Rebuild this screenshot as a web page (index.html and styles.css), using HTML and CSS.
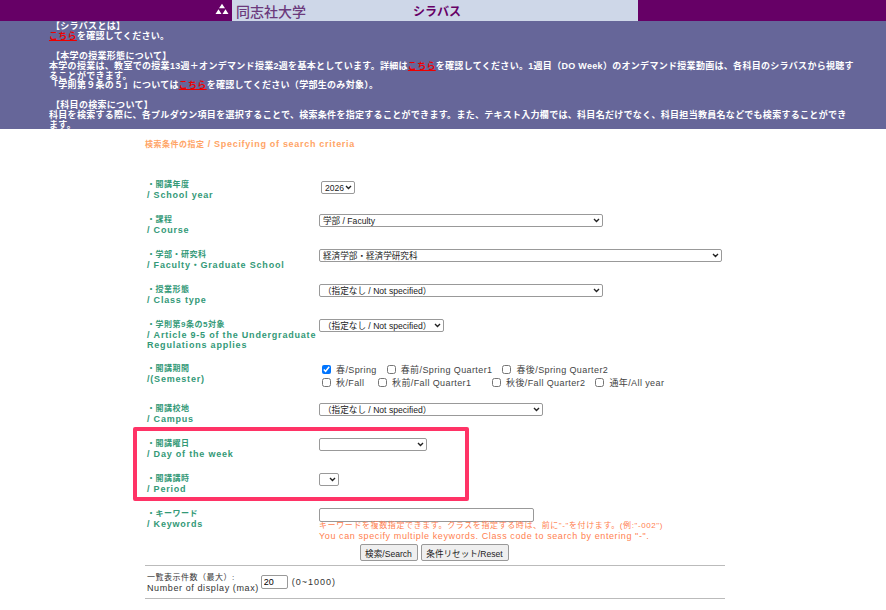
FILE: index.html
```html
<!DOCTYPE html>
<html lang="ja">
<head>
  <meta charset="UTF-8" />
  <title>シラバス</title>
  <link rel="stylesheet" href="styles.css">
</head>
<body>

  <!-- Header -->
  <div class="top-bar">
    <div class="logo-mark">
      <svg width="14" height="14" viewBox="0 0 14 14">
        <path d="M7 .8 L10 5.2 L4 5.2 Z M3.5 6.2 L6.5 11 L.5 11 Z M10.5 6.2 L13.5 11 L7.5 11 Z" fill="#fff"/>
      </svg>
    </div>
    <div class="title-box">
      <span class="univ-name">同志社大学</span>
      <span class="page-name">シラバス</span>
    </div>
  </div>

  <!-- Notice -->
  <div class="notice">
    <p class="indent">【シラバスとは】</p>
    <p><a href="#">こちら</a>を確認してください。</p>
    <p>&nbsp;</p>
    <p class="indent">【本学の授業形態について】</p>
    <p>本学の授業は、教室での授業13週＋オンデマンド授業2週を基本としています。詳細は<a href="#">こちら</a>を確認してください。1週目（DO Week）のオンデマンド授業動画は、各科目のシラバスから視聴することができます。</p>
    <p>「学則第９条の５」については<a href="#">こちら</a>を確認してください（学部生のみ対象）。</p>
    <p>&nbsp;</p>
    <p class="indent">【科目の検索について】</p>
    <p>科目を検索する際に、各プルダウン項目を選択することで、検索条件を指定することができます。また、テキスト入力欄では、科目名だけでなく、科目担当教員名などでも検索することができます。</p>
  </div>

  <!-- Search form -->
  <form class="search-form">
    <h2><span class="jp">検索条件の指定</span> / Specifying of search criteria</h2>

    <div class="highlight-box"></div>

    <div class="form-grid">
      <div class="row">
        <div class="label"><span class="jp">・開講年度</span><br>/ School year</div>
        <div class="field"><select class="sel-year"><option>2026</option></select></div>
      </div>
      <div class="row">
        <div class="label"><span class="jp">・課程</span><br>/ Course</div>
        <div class="field"><select class="sel-course"><option>学部 / Faculty</option></select></div>
      </div>
      <div class="row">
        <div class="label"><span class="jp">・学部・研究科</span><br>/ Faculty・Graduate School</div>
        <div class="field"><select class="sel-faculty"><option>経済学部・経済学研究科</option></select></div>
      </div>
      <div class="row">
        <div class="label"><span class="jp">・授業形態</span><br>/ Class type</div>
        <div class="field"><select class="sel-course"><option>（指定なし / Not specified）</option></select></div>
      </div>
      <div class="row row-tall">
        <div class="label"><span class="jp">・学則第9条の5対象</span><br>/ Article 9-5 of the Undergraduate Regulations applies</div>
        <div class="field"><select class="sel-article"><option>（指定なし / Not specified）</option></select></div>
      </div>
      <div class="row row-semester">
        <div class="label"><span class="jp">・開講期間</span><br>/(Semester)</div>
        <div class="field">
          <div class="checks">
            <label><input type="checkbox" checked>春/Spring</label>
            <label><input type="checkbox">春前/Spring Quarter1</label>
            <label><input type="checkbox">春後/Spring Quarter2</label>
          </div>
          <div class="checks">
            <label class="w-fall"><input type="checkbox">秋/Fall</label>
            <label class="w-q1"><input type="checkbox">秋前/Fall Quarter1</label>
            <label><input type="checkbox">秋後/Fall Quarter2</label>
            <label><input type="checkbox">通年/All year</label>
          </div>
        </div>
      </div>
      <div class="row">
        <div class="label"><span class="jp">・開講校地</span><br>/ Campus</div>
        <div class="field"><select class="sel-campus"><option>（指定なし / Not specified）</option></select></div>
      </div>
      <div class="row">
        <div class="label"><span class="jp">・開講曜日</span><br>/ Day of the week</div>
        <div class="field"><select class="sel-day"><option></option></select></div>
      </div>
      <div class="row">
        <div class="label"><span class="jp">・開講講時</span><br>/ Period</div>
        <div class="field"><select class="sel-period"><option></option></select></div>
      </div>
      <div class="row row-keyword">
        <div class="label"><span class="jp">・キーワード</span><br>/ Keywords</div>
        <div class="field">
          <input type="text" class="keyword">
          <p class="hint jp">キーワードを複数指定できます。クラスを指定する時は、前に"-"を付けます。(例:"-002")</p>
          <p class="hint">You can specify multiple keywords. Class code to search by entering "-".</p>
        </div>
      </div>
    </div>

    <div class="buttons">
      <button type="button" class="btn-search">検索/Search</button>
      <button type="button" class="btn-reset">条件リセット/Reset</button>
    </div>

    <div class="display-count">
      <div><span class="jp">一覧表示件数（最大）:</span><br>Number of display (max)</div>
      <input type="text" class="count" value="20">
      <div class="range">(0~1000)</div>
    </div>
  </form>

</body>
</html>
```

FILE: styles.css
```css
* {
  margin: 0;
  padding: 0;
  box-sizing: border-box;
}

body {
  font-family: "Liberation Sans", "Noto Sans CJK JP", sans-serif;
  background-color: #fff;
  height: 610px;
  overflow: hidden;
}

.top-bar {
  height: 21px;
  background-color: #660066;
  display: flex;
  justify-content: flex-end;
  padding-right: 248px;
}

.logo-mark {
  width: 17px;
  padding-top: 3px;
}

.title-box {
  width: 406px;
  background-color: #ced7e8;
  color: #660066;
  display: flex;
  align-items: center;
  padding-left: 4px;
}

.univ-name {
  font-family: "Noto Sans CJK JP", sans-serif;
  font-size: 14px;
  font-weight: 500;
  width: 177px;
  color: #6b3a7c;
}

.page-name {
  font-family: "Noto Sans CJK JP", sans-serif;
  font-size: 12px;
  font-weight: 700;
}

.notice {
  height: 108px;
  background-color: #666699;
  color: #fff;
  font-size: 9px;
  font-weight: 700;
  letter-spacing: 0.3px;
  line-height: 9.9px;
  padding: 1px 32px 0 49px;
  overflow: hidden;
}

.notice .indent {
  padding-left: 2px;
}

.notice a {
  color: #ee0000;
}

.search-form {
  position: relative;
  width: 580px;
  margin-left: 145px;
}

h2 {
  color: #ffa466;
  font-size: 9px;
  letter-spacing: 0.7px;
  line-height: 12px;
  padding-top: 9px;
  margin-bottom: 28px;
}

.jp {
  font-size: 8px;
  letter-spacing: 0.5px;
}

.highlight-box {
  position: absolute;
  left: -12px;
  top: 298px;
  width: 336px;
  height: 74px;
  border: 4px solid #ff3366;
  border-radius: 2px;
}

.row {
  display: grid;
  grid-template-columns: 174px 1fr;
  height: 35px;
}

.row-tall {
  height: 44px;
}

.row-semester {
  height: 40px;
}

.label {
  color: #339977;
  font-size: 9px;
  font-weight: 700;
  letter-spacing: 0.8px;
  line-height: 10px;
  padding-left: 2px;
}

select {
  appearance: none;
  display: block;
  height: 13px;
  padding: 0 10px 0 3px;
  font-family: inherit;
  font-size: 8.6px;
  color: #222;
  border: 1px solid #999;
  border-radius: 2px;
  background: #fff url("data:image/svg+xml,%3Csvg xmlns='http://www.w3.org/2000/svg' width='7' height='5'%3E%3Cpath d='M1 1l2.5 2.5L6 1' fill='none' stroke='%23222' stroke-width='1.4'/%3E%3C/svg%3E") no-repeat right 2px center;
}

.sel-year { width: 34px; margin: 2px 0 0 2px; }
.sel-course { width: 284px; }
.sel-faculty { width: 403px; }
.sel-article { width: 125px; }
.sel-campus { width: 224px; }
.sel-day { width: 108px; }
.sel-period { width: 20px; }

.checks {
  display: flex;
  height: 13px;
  align-items: center;
  margin-left: 3px;
  gap: 10px;
  color: #444;
  font-size: 9px;
  letter-spacing: 0.4px;
}

.checks label {
  display: flex;
  align-items: center;
}

.checks input {
  width: 9px;
  height: 9px;
  margin-right: 5px;
}

.w-fall { width: 46px; }
.w-q1 { width: 104px; }

.keyword {
  width: 215px;
  height: 14px;
  display: block;
  border: 1px solid #999;
  border-radius: 2px;
}

.row-keyword {
  height: 36px;
}

.hint {
  color: #ff7f50;
  font-size: 9px;
  letter-spacing: 0.6px;
  line-height: 11px;
}

.hint.jp {
  font-size: 8px;
  line-height: 10px;
  margin-top: -1px;
}

.buttons {
  display: flex;
  justify-content: center;
  gap: 3px;
  height: 22px;
  padding: 0 2px 3px 0;
  border-bottom: 1px solid #bbb;
}

button {
  height: 17px;
  font-family: inherit;
  font-size: 8.6px;
  color: #222;
  background-color: #efefef;
  border: 1px solid #999;
  border-radius: 2px;
}

.btn-search { width: 58px; }
.btn-reset { width: 88px; }

.display-count {
  display: flex;
  align-items: center;
  height: 33px;
  padding-left: 2px;
  color: #333;
  font-size: 9px;
  letter-spacing: 0.6px;
  line-height: 10px;
  border-bottom: 1px solid #bbb;
}

.count {
  width: 27px;
  height: 14px;
  margin: 0 4px 0 2px;
  padding-left: 2px;
  font-size: 9px;
  border: 1px solid #999;
  border-radius: 2px;
}

.range {
  letter-spacing: 1px;
}
```
